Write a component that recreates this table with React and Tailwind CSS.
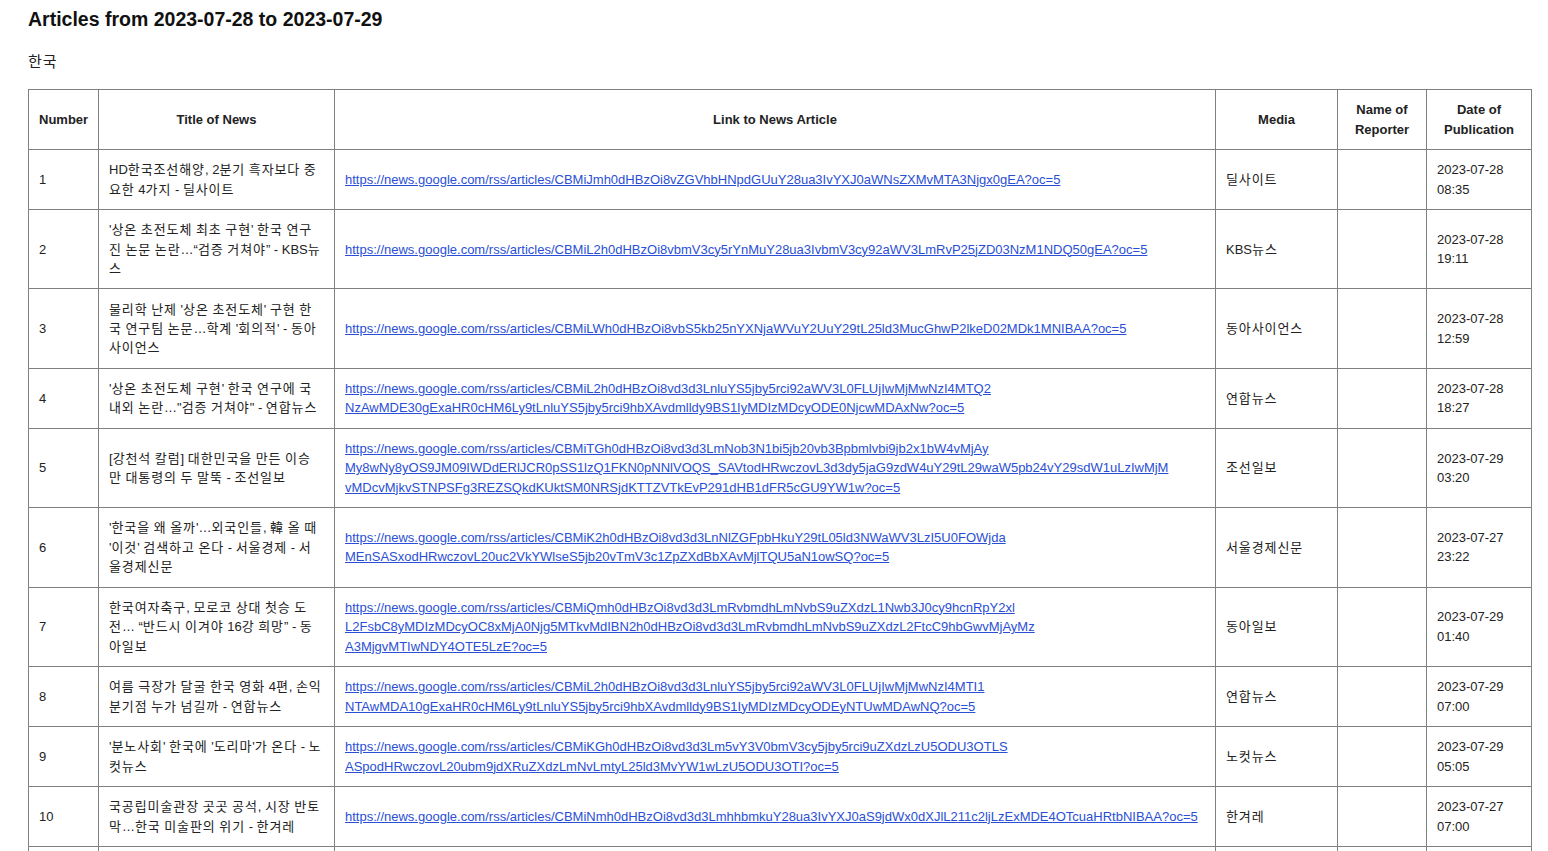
import React from 'react';

// titles are split where the reference wraps them
const rows = [
  {
    title: ['HD한국조선해양, 2분기 흑자보다 중', '요한 4가지 - 딜사이트'],
    link: ['https://news.google.com/rss/articles/CBMiJmh0dHBzOi8vZGVhbHNpdGUuY28ua3IvYXJ0aWNsZXMvMTA3Njgx0gEA?oc=5'],
    media: '딜사이트',
    date: '2023-07-28 08:35',
  },
  {
    title: ["'상온 초전도체 최초 구현' 한국 연구", '진 논문 논란…“검증 거쳐야” - KBS뉴', '스'],
    link: ['https://news.google.com/rss/articles/CBMiL2h0dHBzOi8vbmV3cy5rYnMuY28ua3IvbmV3cy92aWV3LmRvP25jZD03NzM1NDQ50gEA?oc=5'],
    media: 'KBS뉴스',
    date: '2023-07-28 19:11',
  },
  {
    title: ["물리학 난제 '상온 초전도체' 구현 한", "국 연구팀 논문…학계 '회의적' - 동아", '사이언스'],
    link: ['https://news.google.com/rss/articles/CBMiLWh0dHBzOi8vbS5kb25nYXNjaWVuY2UuY29tL25ld3MucGhwP2lkeD02MDk1MNIBAA?oc=5'],
    media: '동아사이언스',
    date: '2023-07-28 12:59',
  },
  {
    title: ["'상온 초전도체 구현' 한국 연구에 국", '내외 논란…"검증 거쳐야" - 연합뉴스'],
    link: [
      'https://news.google.com/rss/articles/CBMiL2h0dHBzOi8vd3d3LnluYS5jby5rci92aWV3L0FLUjIwMjMwNzI4MTQ2',
      'NzAwMDE30gExaHR0cHM6Ly9tLnluYS5jby5rci9hbXAvdmlldy9BS1IyMDIzMDcyODE0NjcwMDAxNw?oc=5',
    ],
    media: '연합뉴스',
    date: '2023-07-28 18:27',
  },
  {
    title: ['[강천석 칼럼] 대한민국을 만든 이승', '만 대통령의 두 말뚝 - 조선일보'],
    link: [
      'https://news.google.com/rss/articles/CBMiTGh0dHBzOi8vd3d3LmNob3N1bi5jb20vb3Bpbmlvbi9jb2x1bW4vMjAy',
      'My8wNy8yOS9JM09IWDdERlJCR0pSS1lzQ1FKN0pNNlVOQS_SAVtodHRwczovL3d3dy5jaG9zdW4uY29tL29waW5pb24vY29sdW1uLzIwMjM',
      'vMDcvMjkvSTNPSFg3REZSQkdKUktSM0NRSjdKTTZVTkEvP291dHB1dFR5cGU9YW1w?oc=5',
    ],
    media: '조선일보',
    date: '2023-07-29 03:20',
  },
  {
    title: ["'한국을 왜 올까'…외국인들, 韓 올 때", "'이것' 검색하고 온다 - 서울경제 - 서", '울경제신문'],
    link: [
      'https://news.google.com/rss/articles/CBMiK2h0dHBzOi8vd3d3LnNlZGFpbHkuY29tL05ld3NWaWV3LzI5U0FOWjda',
      'MEnSASxodHRwczovL20uc2VkYWlseS5jb20vTmV3c1ZpZXdBbXAvMjlTQU5aN1owSQ?oc=5',
    ],
    media: '서울경제신문',
    date: '2023-07-27 23:22',
  },
  {
    title: ['한국여자축구, 모로코 상대 첫승 도', '전… “반드시 이겨야 16강 희망” - 동', '아일보'],
    link: [
      'https://news.google.com/rss/articles/CBMiQmh0dHBzOi8vd3d3LmRvbmdhLmNvbS9uZXdzL1Nwb3J0cy9hcnRpY2xl',
      'L2FsbC8yMDIzMDcyOC8xMjA0Njg5MTkvMdIBN2h0dHBzOi8vd3d3LmRvbmdhLmNvbS9uZXdzL2FtcC9hbGwvMjAyMz',
      'A3MjgvMTIwNDY4OTE5LzE?oc=5',
    ],
    media: '동아일보',
    date: '2023-07-29 01:40',
  },
  {
    title: ['여름 극장가 달굴 한국 영화 4편, 손익', '분기점 누가 넘길까 - 연합뉴스'],
    link: [
      'https://news.google.com/rss/articles/CBMiL2h0dHBzOi8vd3d3LnluYS5jby5rci92aWV3L0FLUjIwMjMwNzI4MTI1',
      'NTAwMDA10gExaHR0cHM6Ly9tLnluYS5jby5rci9hbXAvdmlldy9BS1IyMDIzMDcyODEyNTUwMDAwNQ?oc=5',
    ],
    media: '연합뉴스',
    date: '2023-07-29 07:00',
  },
  {
    title: ["'분노사회' 한국에 '도리마'가 온다 - 노", '컷뉴스'],
    link: [
      'https://news.google.com/rss/articles/CBMiKGh0dHBzOi8vd3d3Lm5vY3V0bmV3cy5jby5rci9uZXdzLzU5ODU3OTLS',
      'ASpodHRwczovL20ubm9jdXRuZXdzLmNvLmtyL25ld3MvYW1wLzU5ODU3OTI?oc=5',
    ],
    media: '노컷뉴스',
    date: '2023-07-29 05:05',
  },
  {
    title: ['국공립미술관장 곳곳 공석, 시장 반토', '막…한국 미술판의 위기 - 한겨레'],
    link: ['https://news.google.com/rss/articles/CBMiNmh0dHBzOi8vd3d3LmhhbmkuY28ua3IvYXJ0aS9jdWx0dXJlL211c2ljLzExMDE4OTcuaHRtbNIBAA?oc=5'],
    media: '한겨레',
    date: '2023-07-27 07:00',
  },
];

const cell = 'border border-[#808080] px-[10px] py-[10.1px] align-middle';

// Hangul in the reference runs about 1px wider per syllable than Noto CJK
function Ko({ text }) {
  const parts = text.split(/([\uAC00-\uD7A3\u4E00-\u9FFF]+)/);
  return parts.map((p, i) =>
    /[\uAC00-\uD7A3\u4E00-\u9FFF]/.test(p) ? (
      <span key={i} className="tracking-[0.9px]">{p}</span>
    ) : (
      <React.Fragment key={i}>{p}</React.Fragment>
    )
  );
}

function Lines({ lines }) {
  return lines.map((line, j) => (
    <React.Fragment key={j}>
      {j > 0 && <br />}
      {line}
    </React.Fragment>
  ));
}

export default function App() {
  return (
    <div
      className="h-[851px] overflow-hidden bg-white pl-[28px] pt-[8px] text-[13px] text-[#222]"
      style={{ fontFamily: '"Liberation Sans", Arial, "Noto Sans CJK KR", sans-serif' }}
    >
      <h2 className="text-[19.5px] font-bold leading-[22px] text-[#111]">Articles from 2023-07-28 to 2023-07-29</h2>
      <p className="mt-[22px] text-[15px] leading-[20px] tracking-[1px]">한국</p>

      <table className="mt-[17px] w-[1503px] table-fixed border-collapse leading-[19.4px]">
        <colgroup>
          <col className="w-[70px]" />
          <col className="w-[236px]" />
          <col className="w-[881px]" />
          <col className="w-[122px]" />
          <col className="w-[89px]" />
          <col className="w-[105px]" />
        </colgroup>
        <thead>
          <tr className="font-bold">
            <th className={`${cell} text-left`}>Number</th>
            <th className={`${cell} text-center`}>Title of News</th>
            <th className={`${cell} text-center`}>Link to News Article</th>
            <th className={`${cell} text-center`}>Media</th>
            <th className={`${cell} text-center`}>Name of Reporter</th>
            <th className={`${cell} text-center`}>Date of Publication</th>
          </tr>
        </thead>
        <tbody>
          {rows.map((r, i) => (
            <tr key={i}>
              <td className={cell}>{i + 1}</td>
              <td className={`${cell} whitespace-nowrap`}>
                {r.title.map((line, j) => (
                  <React.Fragment key={j}>
                    {j > 0 && <br />}
                    <Ko text={line} />
                  </React.Fragment>
                ))}
              </td>
              <td className={cell}>
                <a href="#" className="whitespace-nowrap text-[#2a4fd6] underline">
                  <Lines lines={r.link} />
                </a>
              </td>
              <td className={cell}>
                <Ko text={r.media} />
              </td>
              <td className={cell}></td>
              <td className={cell}>{r.date}</td>
            </tr>
          ))}
          {/* next row, only its top edge shows in the viewport */}
          <tr className="h-[60px]">
            <td className={cell}></td>
            <td className={cell}></td>
            <td className={cell}></td>
            <td className={cell}></td>
            <td className={cell}></td>
            <td className={cell}></td>
          </tr>
        </tbody>
      </table>
    </div>
  );
}
